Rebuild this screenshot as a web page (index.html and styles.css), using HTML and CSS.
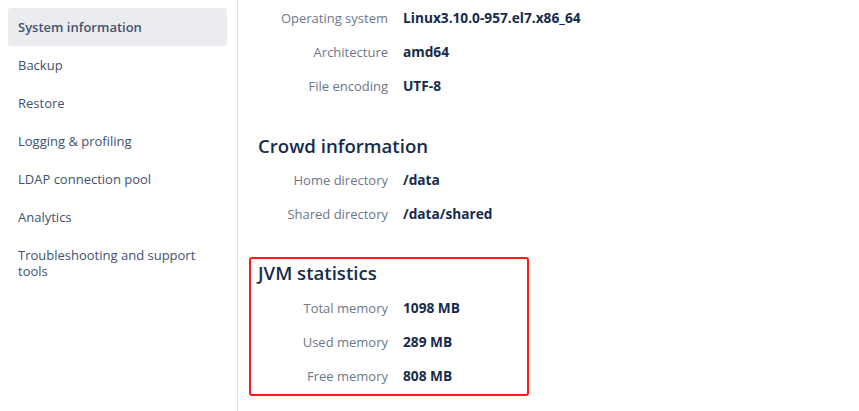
FILE: index.html
```html
<!DOCTYPE html>
<html>
<head>
<meta charset="utf-8">
<link rel="stylesheet" href="styles.css">
</head>
<body>
<div class="page">
  <nav class="sidebar">
    <a class="nav-item active">System information</a>
    <a class="nav-item">Backup</a>
    <a class="nav-item">Restore</a>
    <a class="nav-item">Logging &amp; profiling</a>
    <a class="nav-item">LDAP connection pool</a>
    <a class="nav-item">Analytics</a>
    <a class="nav-item">Troubleshooting and support tools</a>
  </nav>
  <main class="content">
    <section class="section first">
      <dl class="info">
        <dt>Operating system</dt><dd>Linux3.10.0-957.el7.x86_64</dd>
        <dt>Architecture</dt><dd>amd64</dd>
        <dt>File encoding</dt><dd>UTF-8</dd>
      </dl>
    </section>
    <section class="section">
      <h2>Crowd information</h2>
      <dl class="info">
        <dt>Home directory</dt><dd>/data</dd>
        <dt>Shared directory</dt><dd>/data/shared</dd>
      </dl>
    </section>
    <section class="section highlight">
      <h2>JVM statistics</h2>
      <dl class="info">
        <dt>Total memory</dt><dd>1098 MB</dd>
        <dt>Used memory</dt><dd>289 MB</dd>
        <dt>Free memory</dt><dd>808 MB</dd>
      </dl>
    </section>
  </main>
</div>
</body>
</html>
```
FILE: styles.css
```css
html, body {
  margin: 0;
  padding: 0;
  background: #fff;
  font-family: "Open Sans", "Noto Sans", sans-serif;
  font-size: 13px;
  color: #172b4d;
}
.page {
  display: flex;
  height: 411px;
  overflow: hidden;
}
.sidebar {
  width: 219px;
  flex: none;
  padding: 8px 10px 0 8px;
  box-sizing: content-box;
  border-right: 1px solid #dfe1e6;
  display: flex;
  flex-direction: column;
}
.nav-item {
  display: block;
  padding: 11px 10px;
  line-height: 16px;
  color: #42526e;
  border-radius: 3px;
}
.nav-item.active {
  background: #ebecf0;
  font-weight: 600;
}
.content {
  flex: 1;
  padding-left: 20px;
  padding-top: 1px;
}
.section h2 {
  margin: 0;
  font-size: 18.6px;
  line-height: 24px;
  font-weight: 600;
  color: #172b4d;
}
.section + .section {
  margin-top: 31px;
}
.info {
  display: grid;
  grid-template-columns: 130px auto;
  column-gap: 15px;
  margin: 0;
}
.section h2 + .info {
  margin-top: 5px;
}
.info dt {
  text-align: right;
  color: #6b778c;
  line-height: 34px;
}
.info dd {
  margin: 0;
  font-weight: 700;
  font-size: 13.7px;
  line-height: 34px;
  color: #172b4d;
}
.section.highlight {
  width: 262px;
  margin-left: -9px;
  margin-top: 26px;
  padding: 2px 7px 1px 7px;
  border: 2px solid #ff1a1a;
  border-radius: 3px;
}
.highlight h2 + .info {
  margin-top: 6px;
}
```
